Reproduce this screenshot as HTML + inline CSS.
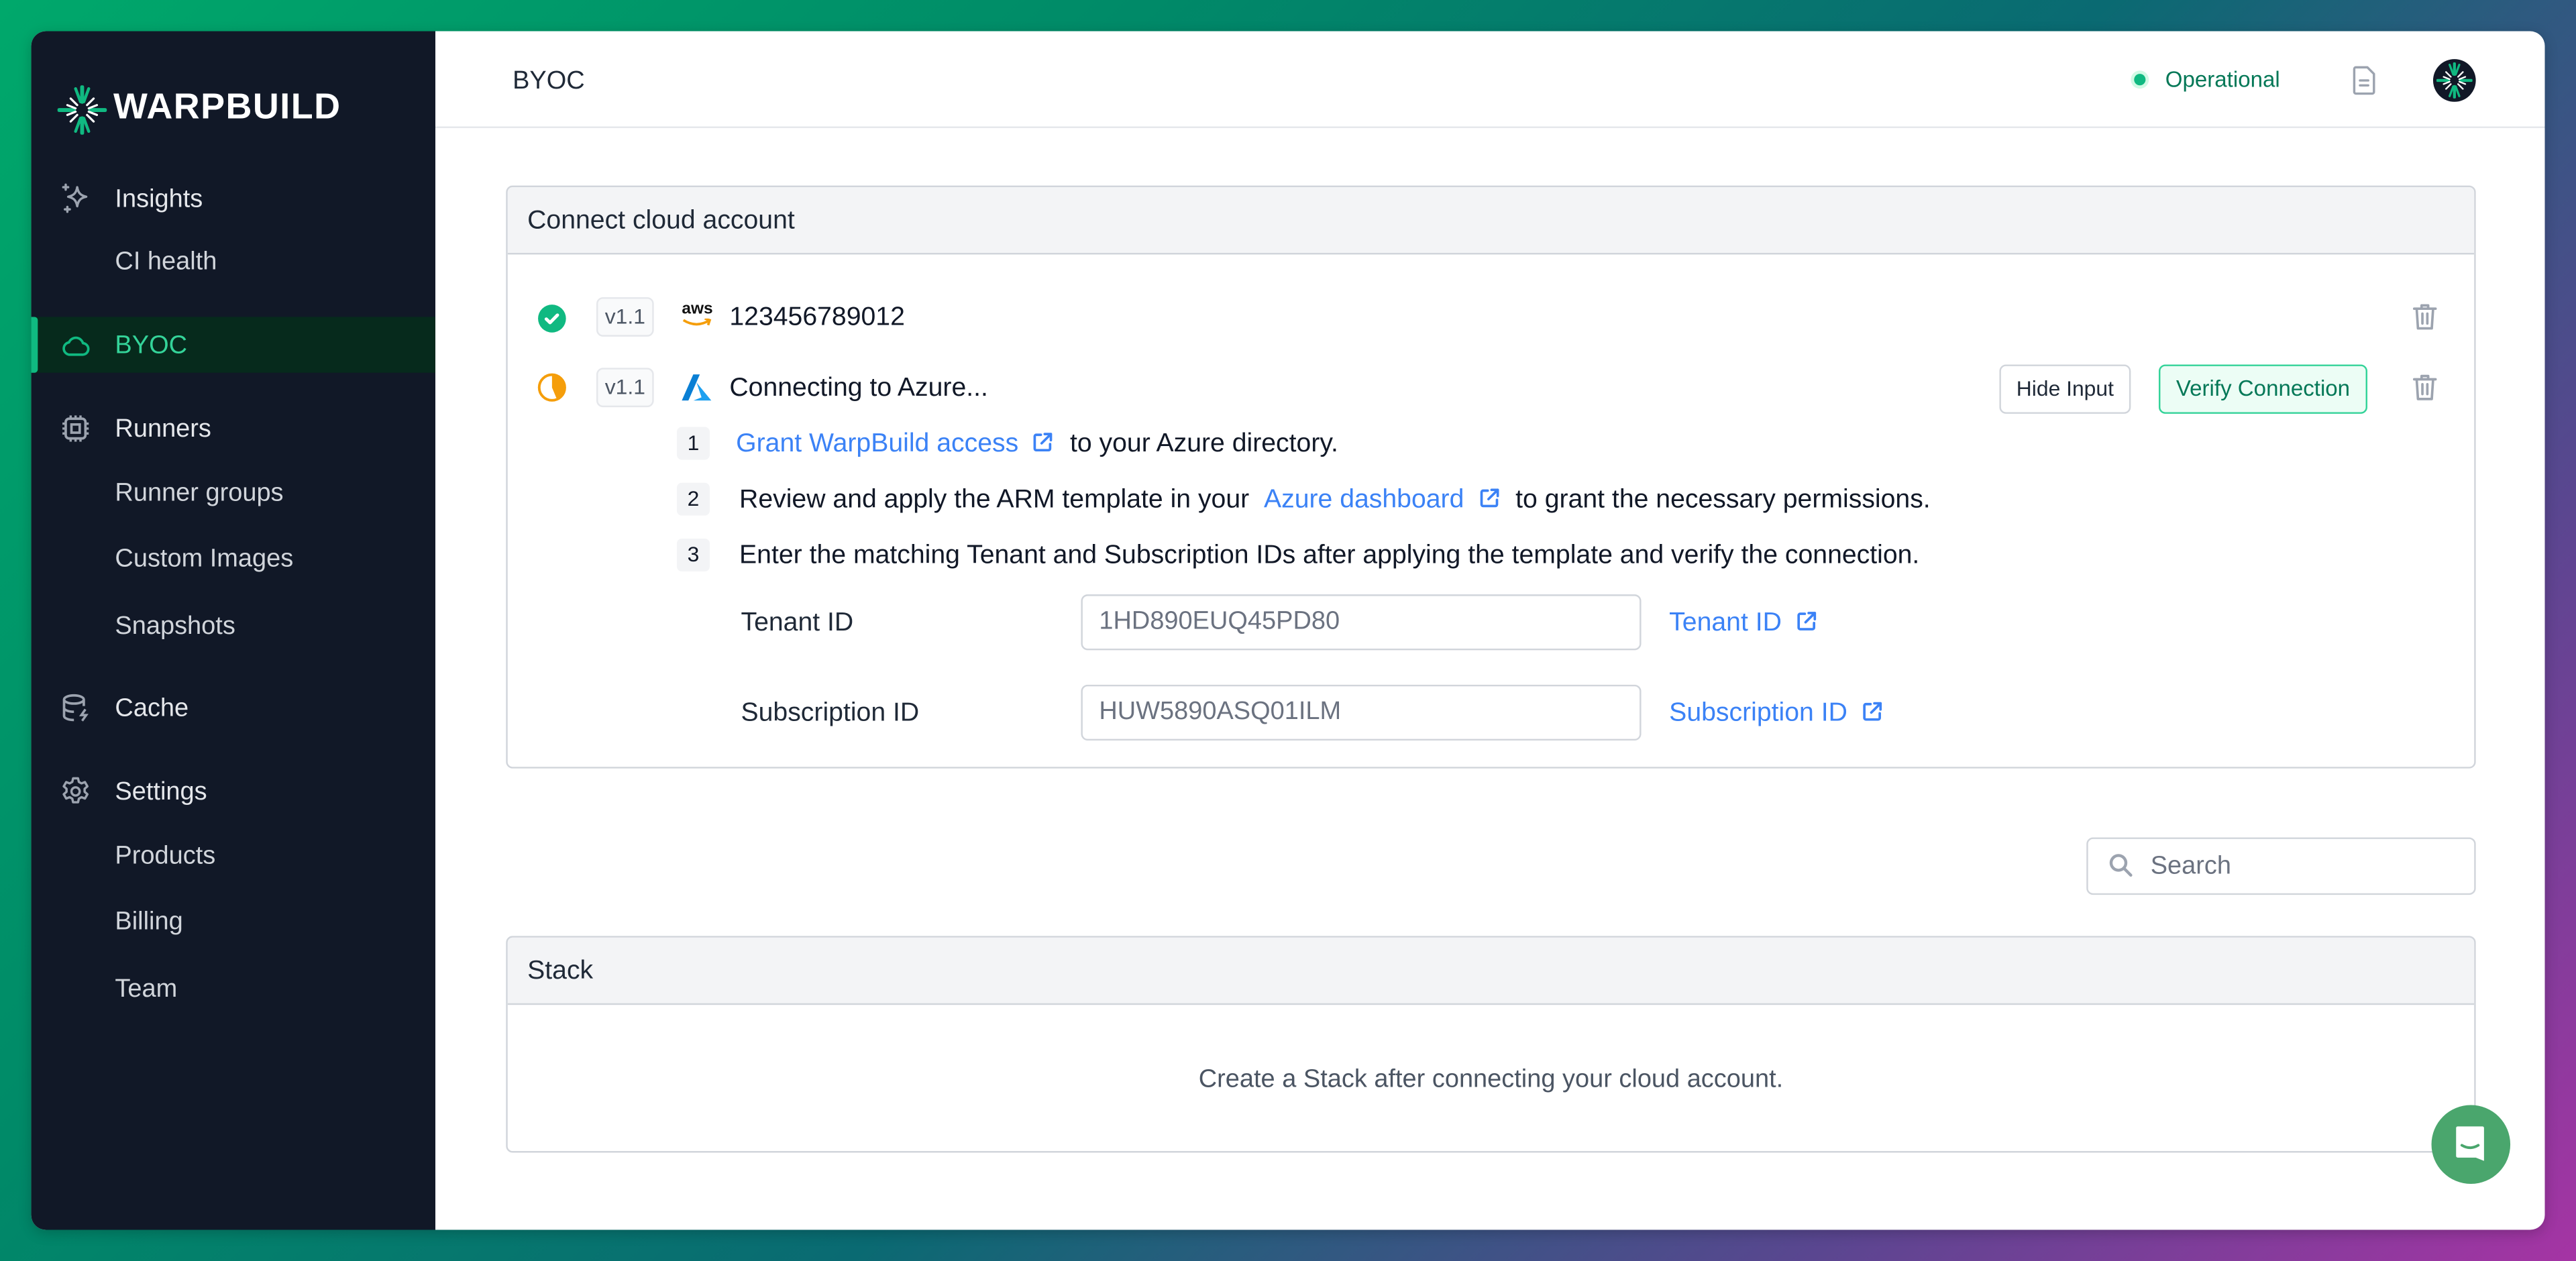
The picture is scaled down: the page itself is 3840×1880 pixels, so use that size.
<!DOCTYPE html>
<html><head><meta charset="utf-8"><style>
*{box-sizing:border-box;margin:0;padding:0}
html,body{width:3840px;height:1880px;overflow:hidden}
body{background:linear-gradient(135deg,#00a86b 0%,#008a68 30%,#0a6a72 55%,#5a4690 80%,#a534a4 100%);font-family:"Liberation Sans",sans-serif}
#s{position:absolute;left:0;top:0;width:1568px;height:768px;transform:scale(2.449,2.448);transform-origin:0 0}
.a{position:absolute;white-space:nowrap}
#win{position:absolute;left:19px;top:19px;width:1530px;height:730px;border-radius:9px;overflow:hidden;background:#fff;box-shadow:0 2px 8px rgba(0,0,0,.2)}
#side{position:absolute;left:0;top:0;width:246px;height:730px;background:#111827}
.nav{color:#e5e7eb;font-size:15.5px}
.sub{color:#d1d5db;font-size:15.5px}
.ic{position:absolute;left:17px;width:20px;height:20px}
.card{position:absolute;border:1px solid #d1d5db;border-radius:4px;background:#fff;overflow:hidden}
.ch{height:41px;background:#f3f4f6;border-bottom:1px solid #d1d5db;font-size:16px;color:#1f2937;padding:12px 12px}
.t{font-size:16px;color:#111827}
.lnk{color:#3b82f6}
.badge{position:absolute;border:1px solid #e5e7eb;background:#f9fafb;border-radius:4px;font-size:13px;color:#4b5563;text-align:center}
.num{position:absolute;background:#f3f4f6;border-radius:3px;font-size:13px;color:#111827;text-align:center;width:20px;height:20px;line-height:20px}
.inp{position:absolute;border:1px solid #d1d5db;border-radius:4px;font-size:15.5px;color:#6b7280;padding:7px 10px;background:#fff}
</style></head><body>
<svg width="0" height="0" style="position:absolute"><defs>
<symbol id="ext" viewBox="0 0 16 16"><path d="M7 3H4a1 1 0 0 0-1 1v8a1 1 0 0 0 1 1h8a1 1 0 0 0 1-1V9M9.5 2.5h4v4M13.5 2.5 7.5 8.5" fill="none" stroke="#3b82f6" stroke-width="1.6" stroke-linecap="round" stroke-linejoin="round"/></symbol>
<symbol id="trash" viewBox="0 0 20 20"><path d="M3.5 5h13M8 5V3h4v2M5 5l.8 12h8.4L15 5M8.5 8v6M11.5 8v6" fill="none" stroke="#9ca3af" stroke-width="1.5" stroke-linecap="round" stroke-linejoin="round"/></symbol>
<symbol id="logo" viewBox="0 0 30 30"><g stroke-linecap="round"><g stroke="#10b981" stroke-width="2.4"><path d="M15 1v9M15 20v9M1 15h9M20 15h9"/><path d="M11 2l3 8M19 28l-3-8M19 2l-3 8M11 28l3-8" stroke-width="1.8"/></g><g stroke="#fff" stroke-width="1.3"><path d="M8 8l4 4M22 22l-4-4M22 8l-4 4M8 22l4-4M6 12l5 2M24 18l-5-2M6 18l5-2M24 12l-5 2"/></g></g></symbol>
</defs></svg>
<div id="s">
<div id="win">
 <div id="side">
  <svg class="a" style="left:16px;top:33px;width:30px;height:30px"><use href="#logo"/></svg>
  <div class="a" style="left:50px;top:33px;color:#fff;font-size:22px;font-weight:bold;letter-spacing:.6px">WARPBUILD</div>
  <svg class="ic" style="top:92px" viewBox="0 0 20 20"><path d="M11 3c.6 3.5 2 5 5.5 5.8-3.5.8-4.9 2.3-5.5 5.8-.6-3.5-2-5-5.5-5.8 3.5-.8 4.9-2.3 5.5-5.8zM4 1.5v3M2.5 3h3M5 15v3M3.5 16.5h3" fill="none" stroke="#9ca3af" stroke-width="1.4" stroke-linejoin="round" stroke-linecap="round"/></svg>
  <div class="a nav" style="left:51px;top:94px">Insights</div>
  <div class="a sub" style="left:51px;top:132px">CI health</div>
  <div class="a" style="left:0;top:174px;width:246px;height:34px;background:#062a1c"></div>
  <div class="a" style="left:0;top:174px;width:4px;height:34px;background:#10b981;border-radius:0 2px 2px 0"></div>
  <svg class="ic" style="top:181px" viewBox="0 0 20 20"><path d="M6 16h8a3.5 3.5 0 0 0 .5-7A4.5 4.5 0 0 0 6 8.5 3.8 3.8 0 0 0 6 16z" fill="none" stroke="#10b981" stroke-width="1.5" stroke-linejoin="round"/></svg>
  <div class="a" style="left:51px;top:183px;color:#34d399;font-size:15.5px">BYOC</div>
  <svg class="ic" style="top:232px" viewBox="0 0 20 20"><rect x="4" y="4" width="12" height="12" rx="2" fill="none" stroke="#9ca3af" stroke-width="1.5"/><rect x="7.5" y="7.5" width="5" height="5" fill="none" stroke="#9ca3af" stroke-width="1.5"/><path d="M7 2v2M10 2v2M13 2v2M7 16v2M10 16v2M13 16v2M2 7h2M2 10h2M2 13h2M16 7h2M16 10h2M16 13h2" stroke="#9ca3af" stroke-width="1.4"/></svg>
  <div class="a nav" style="left:51px;top:234px">Runners</div>
  <div class="a sub" style="left:51px;top:273px">Runner groups</div>
  <div class="a sub" style="left:51px;top:313px">Custom Images</div>
  <div class="a sub" style="left:51px;top:354px">Snapshots</div>
  <svg class="ic" style="top:402px" viewBox="0 0 20 20"><ellipse cx="9" cy="5" rx="6" ry="2.5" fill="none" stroke="#9ca3af" stroke-width="1.5"/><path d="M3 5v10c0 1.4 2.7 2.5 6 2.5M3 10c0 1.4 2.7 2.5 6 2.5M15 5v4" fill="none" stroke="#9ca3af" stroke-width="1.5"/><path d="M16 11l-2.5 3.5h3L14 18" fill="none" stroke="#9ca3af" stroke-width="1.4"/></svg>
  <div class="a nav" style="left:51px;top:404px">Cache</div>
  <svg class="ic" style="top:453px" viewBox="0 0 20 20"><path d="M8.5 2h3l.5 2.2 1.6.9 2.1-.8 1.5 2.6-1.7 1.5v1.8l1.7 1.5-1.5 2.6-2.1-.8-1.6.9-.5 2.2h-3l-.5-2.2-1.6-.9-2.1.8-1.5-2.6 1.7-1.5V8.4L2.8 6.9l1.5-2.6 2.1.8L8 4.2z" fill="none" stroke="#9ca3af" stroke-width="1.4" stroke-linejoin="round"/><circle cx="10" cy="10" r="2.5" fill="none" stroke="#9ca3af" stroke-width="1.4"/></svg>
  <div class="a nav" style="left:51px;top:455px">Settings</div>
  <div class="a sub" style="left:51px;top:494px">Products</div>
  <div class="a sub" style="left:51px;top:534px">Billing</div>
  <div class="a sub" style="left:51px;top:575px">Team</div>
 </div>
 <div class="a" style="left:246px;top:58px;width:1284px;height:1px;background:#e5e7eb"></div>
 <div class="a" style="left:293px;top:22px;font-size:15.5px;color:#1f2937">BYOC</div>
 <div class="a" style="left:1280px;top:26px;width:7px;height:7px;border-radius:50%;background:#10b981;box-shadow:0 0 0 2px #d1fae5"></div>
 <div class="a" style="left:1299px;top:22px;font-size:13.5px;color:#047857">Operational</div>
 <svg class="a" style="left:1410px;top:20px;width:20px;height:20px" viewBox="0 0 20 20"><path d="M5 2h7l4 4v11a1 1 0 0 1-1 1H5a1 1 0 0 1-1-1V3a1 1 0 0 1 1-1zM7.5 10h5M7.5 13h5" fill="none" stroke="#9ca3af" stroke-width="1.4" stroke-linejoin="round" stroke-linecap="round"/></svg>
 <div class="a" style="left:1462px;top:17px;width:26px;height:26px;border-radius:50%;background:#111827"><svg style="position:absolute;left:2px;top:2px;width:22px;height:22px"><use href="#logo"/></svg></div>
 <div class="card" style="left:289px;top:94px;width:1199px;height:355px">
  <div class="ch">Connect cloud account</div>
  <svg class="a" style="left:18px;top:71px;width:18px;height:18px" viewBox="0 0 18 18"><circle cx="9" cy="9" r="8.5" fill="#10b981"/><path d="M5.5 9.3l2.3 2.2 4.5-4.6" fill="none" stroke="#fff" stroke-width="2" stroke-linecap="round" stroke-linejoin="round"/></svg>
  <div class="badge" style="left:54px;top:67px;width:35px;height:24px;line-height:22px">v1.1</div>
  <div class="a" style="left:106px;top:70px;font-size:10px;color:#111;font-weight:bold;line-height:10px">aws</div>
  <svg class="a" style="left:106px;top:80px;width:20px;height:6px" viewBox="0 0 20 6"><path d="M1 1q8 5 16 0M14 0l3 1-1 3" fill="none" stroke="#f59e0b" stroke-width="1.5"/></svg>
  <div class="a t" style="left:135px;top:71px;font-size:16px">123456789012</div>
  <svg class="a" style="left:1157px;top:69px;width:20px;height:20px"><use href="#trash"/></svg>
  <svg class="a" style="left:18px;top:113px;width:18px;height:18px" viewBox="0 0 18 18"><circle cx="9" cy="9" r="7.8" fill="none" stroke="#f59e0b" stroke-width="1.6"/><path d="M9 1.2A7.8 7.8 0 0 1 16.8 9 7.8 7.8 0 0 1 12 16.2L9 9z" fill="#f59e0b"/></svg>
  <div class="badge" style="left:54px;top:110px;width:35px;height:24px;line-height:22px">v1.1</div>
  <svg class="a" style="left:106px;top:114px;width:18px;height:16px" viewBox="0 0 18 16"><path d="M7 0h4L4 16H0z" fill="#0a7fd4"/><path d="M9 5l9 11H7l5-2z" fill="#1ea0f0"/></svg>
  <div class="a t" style="left:135px;top:114px;font-size:16px">Connecting to Azure...</div>
  <div class="a" style="left:908px;top:108px;width:80px;height:30px;border:1px solid #d1d5db;border-radius:4px;font-size:13px;color:#1f2937;text-align:center;line-height:28px">Hide Input</div>
  <div class="a" style="left:1005px;top:108px;width:127px;height:30px;border:1px solid #34d399;background:#ecfdf5;border-radius:4px;font-size:13.5px;color:#047857;text-align:center;line-height:28px">Verify Connection</div>
  <svg class="a" style="left:1157px;top:112px;width:20px;height:20px"><use href="#trash"/></svg>
  <div class="num" style="left:103px;top:146px">1</div>
  <div class="a t" style="left:139px;top:148px"><span class="lnk">Grant WarpBuild access</span> <svg style="width:15px;height:15px;vertical-align:-2px;margin-left:3px"><use href="#ext"/></svg> &nbsp;to your Azure directory.</div>
  <div class="num" style="left:103px;top:180px">2</div>
  <div class="a t" style="left:141px;top:182px">Review and apply the ARM template in your &nbsp;<span class="lnk">Azure dashboard</span> <svg style="width:15px;height:15px;vertical-align:-2px;margin-left:3px"><use href="#ext"/></svg> &nbsp;to grant the necessary permissions.</div>
  <div class="num" style="left:103px;top:214px">3</div>
  <div class="a t" style="left:141px;top:216px">Enter the matching Tenant and Subscription IDs after applying the template and verify the connection.</div>
  <div class="a t" style="left:142px;top:257px;color:#1f2937">Tenant ID</div>
  <div class="inp" style="left:349px;top:248px;width:341px;height:34px">1HD890EUQ45PD80</div>
  <div class="a lnk" style="left:707px;top:257px;font-size:16px">Tenant ID <svg style="width:15px;height:15px;vertical-align:-2px;margin-left:3px"><use href="#ext"/></svg></div>
  <div class="a t" style="left:142px;top:312px;color:#1f2937">Subscription ID</div>
  <div class="inp" style="left:349px;top:303px;width:341px;height:34px">HUW5890ASQ01ILM</div>
  <div class="a lnk" style="left:707px;top:312px;font-size:16px">Subscription ID <svg style="width:15px;height:15px;vertical-align:-2px;margin-left:3px"><use href="#ext"/></svg></div>
 </div>
 <div class="a" style="left:1251px;top:491px;width:237px;height:35px;border:1px solid #d1d5db;border-radius:4px"></div>
 <svg class="a" style="left:1264px;top:500px;width:16px;height:16px" viewBox="0 0 16 16"><circle cx="6.5" cy="6.5" r="4.5" fill="none" stroke="#9ca3af" stroke-width="1.8"/><path d="M10 10l4 4" stroke="#9ca3af" stroke-width="1.8" stroke-linecap="round"/></svg>
 <div class="a" style="left:1290px;top:500px;font-size:15.5px;color:#6b7280">Search</div>
 <div class="card" style="left:289px;top:551px;width:1199px;height:132px">
  <div class="ch">Stack</div>
  <div class="a" style="left:0;top:78px;width:1197px;text-align:center;font-size:15.5px;color:#4b5563">Create a Stack after connecting your cloud account.</div>
 </div>
 <div class="a" style="left:1461px;top:654px;width:48px;height:48px;border-radius:50%;background:#4aa66d"></div>
 <svg class="a" style="left:1474px;top:666px;width:22px;height:24px" viewBox="0 0 22 24"><path d="M3 1h15a1 1 0 0 1 1 1v20l-5-2H3a1 1 0 0 1-1-1V2a1 1 0 0 1 1-1z" fill="#fff"/><path d="M5.5 12.5q5 3 10 0" fill="none" stroke="#4aa66d" stroke-width="1.6" stroke-linecap="round"/></svg>
</div>
</div>
</body></html>
